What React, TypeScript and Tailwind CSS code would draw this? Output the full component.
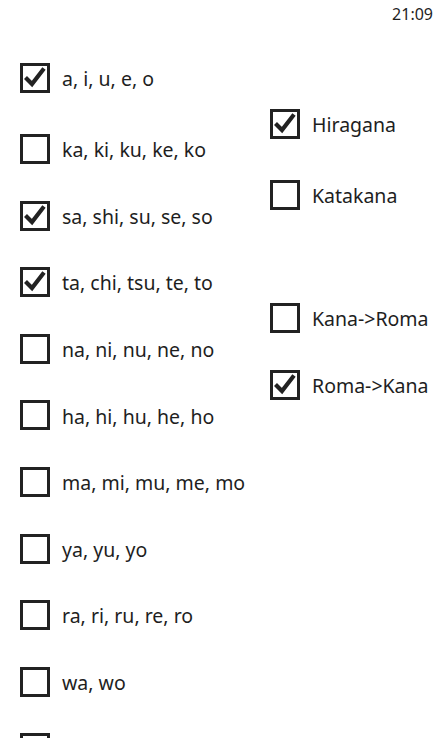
const kana = [
  { label: "a, i, u, e, o", checked: true },
  { label: "ka, ki, ku, ke, ko", checked: false },
  { label: "sa, shi, su, se, so", checked: true },
  { label: "ta, chi, tsu, te, to", checked: true },
  { label: "na, ni, nu, ne, no", checked: false },
  { label: "ha, hi, hu, he, ho", checked: false },
  { label: "ma, mi, mu, me, mo", checked: false },
  { label: "ya, yu, yo", checked: false },
  { label: "ra, ri, ru, re, ro", checked: false },
  { label: "wa, wo", checked: false },
  { label: "", checked: false },
];

function Box({ checked }: { checked: boolean }) {
  return (
    <div className="w-[30px] h-[30px] shrink-0 border-[3px] border-[#222222] bg-white">
      {checked && (
        <svg viewBox="0 0 24 24" className="w-full h-full">
          <path
            d="M2.5 11.5 L9 18 L21 2.5"
            fill="none"
            stroke="#222222"
            strokeWidth="4.2"
            strokeLinecap="butt"
            strokeLinejoin="miter"
          />
        </svg>
      )}
    </div>
  );
}

function Row({ label, checked, className = "" }: { label: string; checked: boolean; className?: string }) {
  return (
    <div className={`flex items-center gap-3 h-[30px] ${className}`}>
      <Box checked={checked} />
      {label && (
        <span className="text-[19.5px] leading-none text-[#1e1e1e] whitespace-nowrap translate-y-[1px]">
          {label}
        </span>
      )}
    </div>
  );
}

export default function App() {
  return (
    <div
      className="w-[443px] h-[738px] overflow-hidden bg-white relative"
      style={{ fontFamily: '"Noto Sans", "Open Sans", sans-serif' }}
    >
      <div className="flex justify-end pr-[10px] pt-[4px] h-[30px]">
        <span className="text-[16px] leading-5 text-[#1e1e1e]">21:09</span>
      </div>
      <div className="flex">
        <div className="w-[250px] pl-5 pt-[33px] flex flex-col">
          {kana.map((k, i) => (
            <Row
              key={i}
              label={k.label}
              checked={k.checked}
              className={i === 0 ? "" : i === 1 ? "mt-[41px]" : "mt-[36.6px]"}
            />
          ))}
        </div>
        <div className="flex-1 pl-5 pt-[79px] flex flex-col">
          <Row label="Hiragana" checked={true} />
          <Row label="Katakana" checked={false} className="mt-[41px]" />
          <Row label="Kana->Roma" checked={false} className="mt-[93px]" />
          <Row label="Roma->Kana" checked={true} className="mt-[37px]" />
        </div>
      </div>
    </div>
  );
}
